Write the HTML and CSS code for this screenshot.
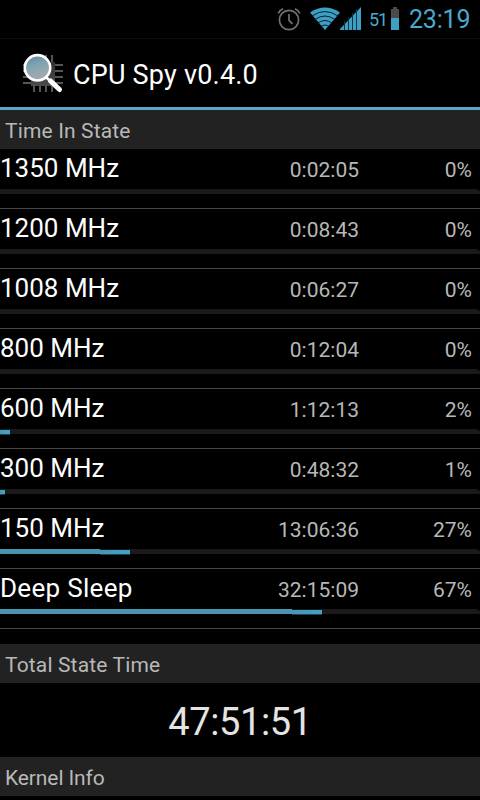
FILE: index.html
```html
<!DOCTYPE html>
<html lang="en">
<head>
<meta charset="utf-8">
<title>CPU Spy</title>
<link rel="stylesheet" href="styles.css">
</head>
<body>
<div class="status">
  <svg class="alarm" width="24" height="24" viewBox="0 0 24 24" fill="none" stroke="#717171" stroke-width="1.700"><circle cx="12" cy="13" r="9.600"/><path d="M12 7v6.300l3.500 3.500M1.200 6.500Q2.500 3 6 1.700M22.800 6.500Q21.500 3 18 1.700"/></svg>
  <svg class="wifi" width="30" height="24" viewBox="0 0 30 24"><path fill="#3d9fc4" d="M0 5.500Q15-4.500 30 5.500L15 23Z"/><path fill="none" stroke="#06202a" stroke-width="1" d="M2 9Q15 0 28 9M5 12.500Q15 5.500 25 12.500M8 16Q15 11 22 16M11 19.300Q15 16.500 19 19.300"/></svg>
  <svg class="signal" width="22" height="24" viewBox="0 0 22 24"><path fill="#3d9fc4" d="M0 23V22L21 0V23Z"/><path stroke="#0b3442" stroke-width="1" d="M4.500 14v9M8.500 10v13M12.500 6v17M16.500 2v21"/></svg>
  <span class="level">51</span>
  <svg class="battery" width="8" height="24" viewBox="0 0 8 24"><path fill="#4a4a4a" d="M2 0h4v2h2v10H0V2h2Z"/><path fill="#3d9fc4" d="M0 11h8v12H0Z"/></svg>
  <span class="clock">23:19</span>
</div>
<header class="bar">
  <svg class="logo" width="44" height="44" viewBox="0 0 44 44">
    <defs>
      <linearGradient id="lens" x1="0" y1="0" x2="0.300" y2="1"><stop offset="0" stop-color="#5c8799"/><stop offset="0.450" stop-color="#7fa3b0"/><stop offset="1" stop-color="#a3abae"/></linearGradient>
      <linearGradient id="chip" x1="0" y1="0" x2="0" y2="1"><stop offset="0" stop-color="#303030"/><stop offset="1" stop-color="#4c4c4c"/></linearGradient>
    </defs>
    <path stroke="#555" stroke-width="2" d="M12 2v37M18 2v37M24 2v37M30 2v37M1 12h40M1 18h40M1 24h40M1 30h40"/>
    <path fill="url(#chip)" d="M9 9h24v24H9Z"/>
    <circle cx="15.500" cy="14.800" r="12.700" fill="url(#lens)" stroke="#fff" stroke-width="2.600"/>
    <path stroke="#fff" stroke-width="2.500" d="M24 24l5 5"/>
    <path stroke="#fff" stroke-width="5" stroke-linecap="round" d="M28.500 28l9 8.500"/>
  </svg>
  <h1>CPU Spy v0.4.0</h1>
</header>
<h2>Time In State</h2>
<ul class="states">
  <li><div class="line"><b>1350 MHz</b><span class="time">0:02:05</span><span class="pct">0%</span></div><div class="track"></div></li>
  <li><div class="line"><b>1200 MHz</b><span class="time">0:08:43</span><span class="pct">0%</span></div><div class="track"></div></li>
  <li><div class="line"><b>1008 MHz</b><span class="time">0:06:27</span><span class="pct">0%</span></div><div class="track"></div></li>
  <li><div class="line"><b>800 MHz</b><span class="time">0:12:04</span><span class="pct">0%</span></div><div class="track"></div></li>
  <li><div class="line"><b>600 MHz</b><span class="time">1:12:13</span><span class="pct">2%</span></div><div class="track"><i style="width:10px"></i></div></li>
  <li><div class="line"><b>300 MHz</b><span class="time">0:48:32</span><span class="pct">1%</span></div><div class="track"><i style="width:5px"></i></div></li>
  <li><div class="line"><b>150 MHz</b><span class="time">13:06:36</span><span class="pct">27%</span></div><div class="track"><i style="width:130px"></i></div></li>
  <li><div class="line"><b class="sleep">Deep Sleep</b><span class="time">32:15:09</span><span class="pct">67%</span></div><div class="track"><i style="width:322px"></i></div></li>
</ul>
<h2 class="gap">Total State Time</h2>
<div class="total">47:51:51</div>
<h2 class="kernel">Kernel Info</h2>
</body>
</html>
```
FILE: styles.css
```css
* { box-sizing: border-box; }
body {
  margin: 0;
  width: 480px;
  height: 800px;
  overflow: hidden;
  background: #000;
  color: #fff;
  font-family: Roboto, "Liberation Sans", sans-serif;
}
h1, h2, ul { margin: 0; padding: 0; font-weight: 400; }
.status {
  display: flex;
  height: 38px;
  padding: 7px 10px 0 0;
  justify-content: flex-end;
  color: #49a9ce;
}
.status svg { flex: none; }
.alarm { margin-right: 9px; }
.signal { margin-right: 7px; }
.level { width: 18px; margin-right: 4px; font-size: 18px; line-height: 26px; letter-spacing: -1px; }
.battery { margin-right: 10px; }
.clock { width: 61px; font-size: 25px; line-height: 26px; letter-spacing: -0.2px; white-space: nowrap; }
.bar {
  display: flex;
  height: 72px;
  padding: 14px 0 0 22px;
  border-top: 1px solid #0d0d0d;
  border-bottom: 3px solid #5aa7cb;
}
.logo { flex: none; }
.bar h1 { margin-left: 7px; font-size: 27px; line-height: 44px; letter-spacing: 0.2px; white-space: nowrap; }
h2 {
  height: 39px;
  padding-left: 5px;
  background: #222;
  color: #b8b8b8;
  font-size: 21px;
  line-height: 43px;
  letter-spacing: 0.15px;
  white-space: nowrap;
}
.gap { margin-top: 15px; }
.kernel { letter-spacing: -0.1px; }
.states { list-style: none; }
.states li { height: 60px; border-bottom: 1px solid #484848; }
.line {
  display: grid;
  grid-template-columns: 200px 159px 113px;
  height: 40px;
  line-height: 38px;
}
.line b { font-size: 26px; font-weight: 400; white-space: nowrap; }
.line .sleep { letter-spacing: 0.3px; }
.time, .pct { color: #b8b8b8; font-size: 21px; line-height: 42px; text-align: right; }
.track { height: 5px; background: linear-gradient(#1a1a1a, #1a1a1a) 0 0 / 100% 5px no-repeat; border-top-right-radius: 5px 3px; }
.track i {
  display: block;
  height: 6px;
  background:
    linear-gradient(90deg, #4a94b2, #3ba5cf) right 1px / min(30px, 100%) 4px no-repeat,
    linear-gradient(#174556, #174556) right 5px / min(30px, 100%) 1px no-repeat,
    linear-gradient(#4a94b2, #4a94b2) left 0 / calc(100% - 30px) 5px no-repeat;
}
.total {
  height: 74px;
  padding-top: 2px;
  color: #e4e4e4;
  font-size: 38px;
  line-height: 74px;
  letter-spacing: -0.4px;
  text-align: center;
}
```
